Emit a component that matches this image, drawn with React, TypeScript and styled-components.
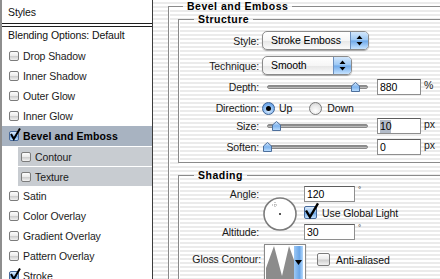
import React from 'react';
import styled, { createGlobalStyle, css } from 'styled-components';

const GlobalStyle = createGlobalStyle`
  html, body {
    margin: 0;
    padding: 0;
  }
  body {
    font-family: "Liberation Sans", Arial, sans-serif;
    font-size: 10px;
    color: #111;
    letter-spacing: -0.1px;
  }
`;

const Window = styled.div`
  width: 440px;
  height: 279px;
  display: flex;
  overflow: hidden;
  background: #fff;
`;

/* ---------- left list ---------- */

const StylesPanel = styled.div`
  width: 150px;
  flex: none;
  border-left: 2px solid #8e8e8e;
  border-right: 1px solid #3c3c3c;
  box-shadow: 1px 0 0 #c4c4c4;
  background: #fff;
  display: flex;
  flex-direction: column;
  overflow: hidden;

  & > * {
    flex-shrink: 0;
  }
`;

const PanelHeader = styled.div`
  height: 23px;
  line-height: 25px;
  padding-left: 6px;
  font-size: 10.5px;
  border-bottom: 1px solid #1e1e1e;
`;

const BlendRow = styled.div`
  margin-top: 2px;
  height: 19px;
  line-height: 17px;
  padding-left: 6px;
  font-size: 10.5px;
  border-top: 1px solid #1e1e1e;
`;

const Item = styled.div<{ $selected?: boolean; $sub?: boolean }>`
  box-sizing: border-box;
  height: 20px;
  display: flex;
  align-items: center;
  gap: 4px;
  padding-left: 7px;
  font-size: 10.5px;
  color: #1c1c1c;
  ${p => p.$selected && css`
    background: #a8b3c1;
    font-weight: bold;
    color: #000;
    letter-spacing: 0.1px;
  `}
  ${p => p.$sub && css`
    margin-left: 16px;
    padding-left: 3px;
    background: #c8ccd1;
    border-top: 1px solid #fff;
  `}
`;

const Box = styled.span<{ $on?: boolean; $size?: number }>`
  position: relative;
  flex: none;
  box-sizing: border-box;
  width: ${p => p.$size ?? 10}px;
  height: ${p => p.$size ?? 10}px;
  border: 1px solid #7c7c7c;
  border-radius: 2px;
  background: linear-gradient(#fdfdfd, #ececec 45%, #cfcfcf 55%, #f2f2f2);
  ${p => p.$on && css`
    border-color: #47699a;
    background: linear-gradient(#dcebfc, #9cc7f3 45%, #6ca8e9 55%, #c3e2ff);
  `}
  svg {
    position: absolute;
    left: 0;
    top: -3px;
    overflow: visible;
  }
`;

const Check: React.FC<{ on?: boolean; size?: number }> = ({ on, size = 10 }) => (
  <Box $on={on} $size={size}>
    {on && (
      <svg width={size} height={size}>
        <path
          d={`M1 ${size * 0.5} L${size * 0.38} ${size} L${size} ${-size * 0.05}`}
          fill="none"
          stroke="#000"
          strokeWidth={size > 11 ? 2.4 : 2}
        />
      </svg>
    )}
  </Box>
);

/* ---------- right side ---------- */

const Content = styled.div`
  flex: 1;
  overflow: hidden;
  padding-left: 15px;
  background: repeating-linear-gradient(#ffffff 0 2px, #ebebeb 2px 4px);
`;

const Group = styled.fieldset<{ $pad?: number }>`
  margin: 0;
  width: 320px;
  min-width: 0;
  padding: 0 0 ${p => p.$pad ?? 0}px ${p => (p.$pad !== undefined ? 0 : 9)}px;
  border: 1px solid #8a8a8a;
  box-shadow: inset 1px 1px 0 #fff, 1px 1px 0 #fff;
`;

const Title = styled.legend<{ $indent: number }>`
  margin-left: ${p => p.$indent}px;
  padding: 0 4px;
  font-family: "Liberation Sans", Arial, sans-serif;
  font-weight: bold;
  font-size: 10.5px;
  letter-spacing: 0.5px;
  line-height: 13px;
  color: #000;
`;

const SubGroup = styled(Group)<{ $gap: number }>`
  margin-top: ${p => p.$gap}px;
`;

const Row = styled.div<{ $h: number; $mt: number }>`
  display: flex;
  align-items: center;
  height: ${p => p.$h}px;
  margin-top: ${p => p.$mt}px;
`;

const Label = styled.span`
  width: 83px;
  flex: none;
  box-sizing: border-box;
  padding-right: 3px;
  text-align: right;
  font-size: 10.5px;
  color: #1a1a1a;
`;

const Popup = styled.div<{ $w: number }>`
  width: ${p => p.$w}px;
  height: 19px;
  box-sizing: border-box;
  display: flex;
  border: 1px solid #8b8b8b;
  border-radius: 5px;
  overflow: hidden;
  background: linear-gradient(#ffffff, #f6f6f6 50%, #e6e6e6 52%, #fbfbfb);
  box-shadow: 0 1px 1px rgba(0, 0, 0, 0.3);
`;

const PopupText = styled.span`
  flex: 1;
  padding-left: 8px;
  line-height: 17px;
  font-size: 10.5px;
  color: #000;
`;

const PopupArrows = styled.span`
  width: 17px;
  display: flex;
  align-items: center;
  justify-content: center;
  border-left: 1px solid #6c8fbd;
  background: linear-gradient(#d3e7fc, #9ac7f4 48%, #6ea9ea 52%, #c6e3ff);
`;

const UpDown = () => (
  <svg width="7" height="11" viewBox="0 0 7 11">
    <path d="M3.5 0.5 L6.5 4 L0.5 4 Z M3.5 10.5 L6.5 7 L0.5 7 Z" fill="#000" />
  </svg>
);

const SliderBox = styled.div`
  position: relative;
  width: 101px;
  height: 16px;
  margin-left: 5px;
  flex: none;
`;

const Track = styled.div`
  position: absolute;
  left: 0;
  right: 0;
  top: 6px;
  height: 4px;
  box-sizing: border-box;
  border-radius: 2px;
  border: 1px solid #8a8a8a;
  background: linear-gradient(#7a7a7a, #a9a9a9 60%, #d8d8d8);
`;

const ThumbMark = styled.svg`
  position: absolute;
  top: 3px;
`;

const Slider: React.FC<{ at: number }> = ({ at }) => (
  <SliderBox>
    <Track />
    <ThumbMark width="9" height="10" viewBox="0 0 9 10" style={{ left: at - 4.5 }}>
      <defs>
        <linearGradient id="thumbFill" x1="0" y1="0" x2="0" y2="1">
          <stop offset="0" stopColor="#d6e9fd" />
          <stop offset="0.5" stopColor="#7fb4ee" />
          <stop offset="1" stopColor="#bfe0ff" />
        </linearGradient>
      </defs>
      <path d="M4.5 0.5 L8.5 4 L8.5 9.5 L0.5 9.5 L0.5 4 Z" fill="url(#thumbFill)" stroke="#4d6f9c" />
    </ThumbMark>
  </SliderBox>
);

const Field = styled.div<{ $w: number; $ml: number }>`
  width: ${p => p.$w}px;
  height: 16px;
  box-sizing: border-box;
  margin-left: ${p => p.$ml}px;
  flex: none;
  display: flex;
  align-items: center;
  padding-left: 2px;
  border: 1px solid #8e8e8e;
  border-top-color: #5e5e5e;
  background: #fff;
  font-size: 10.5px;
  color: #000;
`;

const Selected = styled.span`
  background: #b2bbc8;
  line-height: 13px;
`;

const Unit = styled.span<{ $up?: boolean }>`
  margin-left: 3px;
  font-size: ${p => (p.$up ? 8 : 10.5)}px;
  align-self: ${p => (p.$up ? 'flex-start' : 'auto')};
  margin-top: ${p => (p.$up ? -1 : -4)}px;
  color: #222;
`;

const Radio = styled.span<{ $on?: boolean }>`
  width: 13px;
  height: 13px;
  box-sizing: border-box;
  flex: none;
  border-radius: 50%;
  border: 1px solid #7a7a7a;
  background: radial-gradient(circle at 50% 70%, #ffffff, #e6e6e6 60%, #c4c4c4);
  display: flex;
  align-items: center;
  justify-content: center;
  ${p => p.$on && css`
    border-color: #3f6495;
    background: radial-gradient(circle at 50% 70%, #d9ecff, #7fb3ee 60%, #4d8ad7);
    &::after {
      content: '';
      width: 5px;
      height: 5px;
      border-radius: 50%;
      background: #000;
    }
  `}
`;

const Choice = styled.span<{ $gap: number; $ml?: number; $mt?: number }>`
  display: flex;
  align-items: center;
  gap: ${p => p.$gap}px;
  margin-left: ${p => p.$ml ?? 0}px;
  margin-top: ${p => p.$mt ?? 0}px;
  font-size: 10.5px;
  color: #111;
`;

/* ---------- shading ---------- */

const ShadeGrid = styled.div`
  display: grid;
  grid-template-columns: 83px 42px auto;
  grid-template-rows: 15px 15px 15px;
  row-gap: 4px;
  margin-top: 4px;
  align-items: center;
`;

const Dial = styled.svg`
  grid-column: 2;
  grid-row: 1 / span 3;
  align-self: center;
  margin-top: 2px;
`;

const Cell = styled.div<{ $row: number }>`
  grid-column: 3;
  grid-row: ${p => p.$row};
  display: flex;
  align-items: center;
`;

const GridLabel = styled(Label)<{ $row: number }>`
  grid-column: 1;
  grid-row: ${p => p.$row};
`;

const ContourRow = styled.div`
  display: flex;
  align-items: flex-start;
  margin-top: 5px;
`;

const ContourLabel = styled(Label)`
  margin-top: 9px;
  width: 85px;
`;

const ContourThumb = styled.div`
  width: 42px;
  height: 38px;
  box-sizing: border-box;
  display: flex;
  border: 1px solid #8a8a8a;
  background: #fff;
  padding: 1px;
  box-shadow: 0 1px 1px rgba(0, 0, 0, 0.25);
`;

const ContourArrow = styled.span`
  width: 9px;
  margin-left: auto;
  margin-right: 1px;
  display: flex;
  align-items: center;
  justify-content: center;
  padding-bottom: 2px;
  background: linear-gradient(90deg, #9cc8f5, #6aa6e8 60%, #b6dafd);
`;

const listItems: { name: string; on?: boolean; selected?: boolean; sub?: boolean }[] = [
  { name: 'Drop Shadow' },
  { name: 'Inner Shadow' },
  { name: 'Outer Glow' },
  { name: 'Inner Glow' },
  { name: 'Bevel and Emboss', on: true, selected: true },
  { name: 'Contour', sub: true },
  { name: 'Texture', sub: true },
  { name: 'Satin' },
  { name: 'Color Overlay' },
  { name: 'Gradient Overlay' },
  { name: 'Pattern Overlay' },
  { name: 'Stroke', on: true },
];

const App: React.FC = () => {
  return (
    <Window>
      <GlobalStyle />
      <StylesPanel>
        <PanelHeader>Styles</PanelHeader>
        <BlendRow>Blending Options: Default</BlendRow>
        {listItems.map(it => (
          <Item key={it.name} $selected={it.selected} $sub={it.sub}>
            <Check on={it.on} />
            {it.name}
          </Item>
        ))}
      </StylesPanel>

      <Content>
        <Group>
          <Title $indent={5}>Bevel and Emboss</Title>

          <SubGroup $pad={7} $gap={0}>
            <Title $indent={15}>Structure</Title>
            <Row $h={19} $mt={5}>
              <Label>Style:</Label>
              <Popup $w={107}>
                <PopupText>Stroke Emboss</PopupText>
                <PopupArrows><UpDown /></PopupArrows>
              </Popup>
            </Row>
            <Row $h={19} $mt={6}>
              <Label>Technique:</Label>
              <Popup $w={90}>
                <PopupText>Smooth</PopupText>
                <PopupArrows><UpDown /></PopupArrows>
              </Popup>
            </Row>
            <Row $h={16} $mt={4}>
              <Label>Depth:</Label>
              <Slider at={88} />
              <Field $w={44} $ml={9}>880</Field>
              <Unit>%</Unit>
            </Row>
            <Row $h={16} $mt={5}>
              <Label>Direction:</Label>
              <Choice $gap={4}>
                <Radio $on />
                Up
              </Choice>
              <Choice $gap={5} $ml={17}>
                <Radio />
                Down
              </Choice>
            </Row>
            <Row $h={16} $mt={2}>
              <Label>Size:</Label>
              <Slider at={9} />
              <Field $w={44} $ml={9}><Selected>10</Selected></Field>
              <Unit>px</Unit>
            </Row>
            <Row $h={16} $mt={5}>
              <Label>Soften:</Label>
              <Slider at={0} />
              <Field $w={44} $ml={9}>0</Field>
              <Unit>px</Unit>
            </Row>
          </SubGroup>

          <SubGroup $pad={20} $gap={6}>
            <Title $indent={15}>Shading</Title>
            <ShadeGrid>
              <GridLabel $row={1}>Angle:</GridLabel>
              <Dial width="36" height="36" viewBox="0 0 36 36">
                <circle cx="18" cy="18" r="16" fill="#fff" stroke="#7b7b7b" strokeWidth="1.6" />
                <path d="M13 6 V12 M10 9 H16" stroke="#9a9a9a" strokeWidth="1" strokeDasharray="1 1" />
                <rect x="17" y="17" width="2" height="2" fill="#555" />
              </Dial>
              <Cell $row={1}>
                <Field $w={51} $ml={0}>120</Field>
                <Unit $up>°</Unit>
              </Cell>
              <Cell $row={2}>
                <Choice $gap={5}>
                  <Check on size={13} />
                  Use Global Light
                </Choice>
              </Cell>
              <GridLabel $row={3}>Altitude:</GridLabel>
              <Cell $row={3}>
                <Field $w={51} $ml={0}>30</Field>
                <Unit $up>°</Unit>
              </Cell>
            </ShadeGrid>
            <ContourRow>
              <ContourLabel>Gloss Contour:</ContourLabel>
              <ContourThumb>
                <svg width="28" height="34" viewBox="0 0 28 34">
                  <path d="M0 34 L0 22 L8 0 L16 30 L23 0 L28 14 L28 34 Z" fill="#8c8c8c" />
                </svg>
                <ContourArrow>
                  <svg width="7" height="5" viewBox="0 0 7 5">
                    <path d="M0 0 H7 L3.5 5 Z" fill="#000" />
                  </svg>
                </ContourArrow>
              </ContourThumb>
              <Choice $gap={6} $ml={11} $mt={9}>
                <Check size={13} />
                Anti-aliased
              </Choice>
            </ContourRow>
          </SubGroup>
        </Group>
      </Content>
    </Window>
  );
};

export default App;
